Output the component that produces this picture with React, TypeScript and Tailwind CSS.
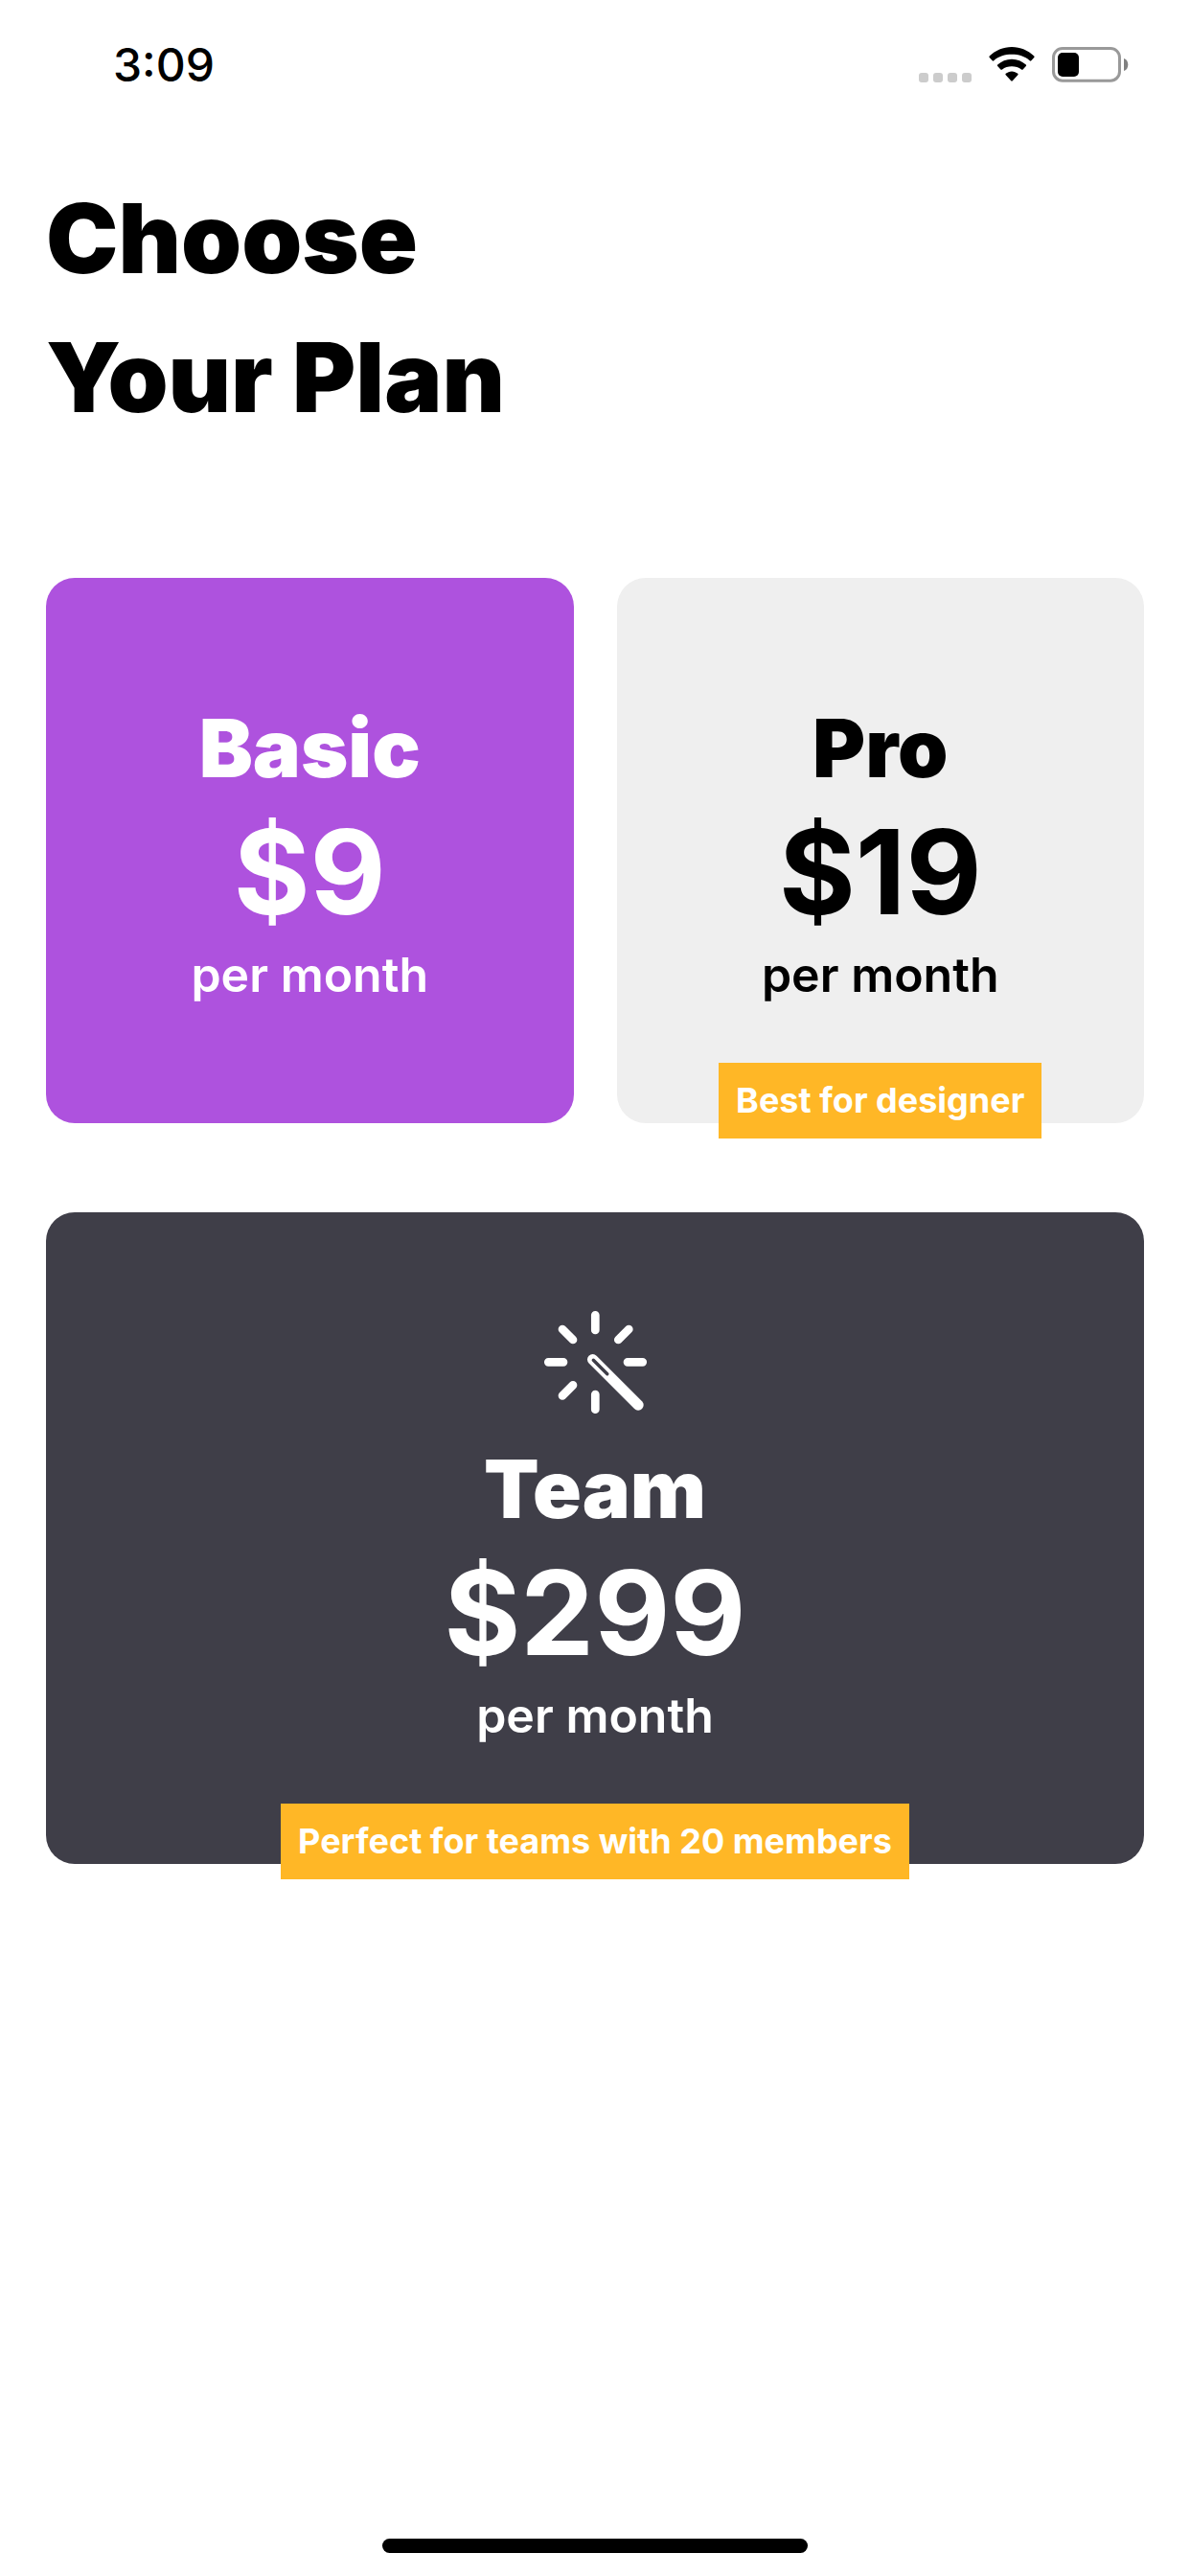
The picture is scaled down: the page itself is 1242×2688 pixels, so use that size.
import type { ReactNode } from "react";

function SignalDots() {
  return (
    <div className="flex gap-[5px]" aria-hidden="true">
      <span className="size-2.5 rounded-[3px] bg-[#cccccc]" />
      <span className="size-2.5 rounded-[3px] bg-[#cccccc]" />
      <span className="size-2.5 rounded-[3px] bg-[#cccccc]" />
      <span className="size-2.5 rounded-[3px] bg-[#cccccc]" />
    </div>
  );
}

function WifiIcon() {
  return (
    <svg viewBox="0 0 48 37" className="h-[37px] w-12" aria-hidden="true">
      <path d="M24 0C33 0 41.2 3.6 47.3 9.5Q48 10.3 47.3 11L44.3 14.3Q43.5 15 42.7 14.3C37.7 9.6 31.1 7.8 24 7.8S10.3 9.6 5.3 14.3Q4.5 15 3.7 14.3L0.7 11Q0 10.3 0.7 9.5C6.8 3.6 15 0 24 0Z" />
      <path d="M24 12.8C29.7 12.8 34.9 15 38.8 18.6Q39.6 19.4 38.8 20.1L35.6 23.4Q34.8 24.1 34 23.5C31.3 21.1 27.8 20.2 24 20.2S16.7 21.1 14 23.5Q13.2 24.1 12.4 23.4L9.2 20.1Q8.4 19.4 9.2 18.6C13.1 15 18.3 12.8 24 12.8Z" />
      <path d="M24 25.4C26.4 25.4 28.6 26.3 30.3 27.8Q31 28.5 30.3 29.2L24.8 35.3Q24 36.1 23.2 35.3L17.7 29.2Q17 28.5 17.7 27.8C19.4 26.3 21.6 25.4 24 25.4Z" />
    </svg>
  );
}

function BatteryIcon() {
  return (
    <svg viewBox="0 0 80 37" className="h-[37px] w-20" aria-hidden="true">
      <rect x="1.5" y="1.5" width="69" height="33.7" rx="9.5" fill="none" stroke="#999999" strokeWidth="3" />
      <rect x="6" y="6" width="22" height="25" rx="5" />
      <path d="M75 12C78.2 13 79.3 15.6 79.3 18.5S78.2 24 75 25Z" fill="#808080" />
    </svg>
  );
}

function WandIcon() {
  return (
    <svg viewBox="0 0 108 108" className="size-27" fill="none" strokeLinecap="round" aria-hidden="true">
      <path
        d="M54.3 5.3V21M54.3 88V103.7M5.3 54.3H21M88 54.3H103.7M20 20L31 31M89.3 20L78.3 31M20 89.3L31 78.3"
        stroke="white"
        strokeWidth="8.7"
      />
      <path d="M51.6 51.6L99.1 99.1" stroke="white" strokeWidth="11.2" />
      <path d="M52.3 52.3L66.8 66.8" stroke="#3f3e48" strokeWidth="3.4" />
    </svg>
  );
}

type PlanProps = {
  name: string;
  price: string;
  className: string;
  icon?: ReactNode;
  badge?: string;
};

function PlanCard({ name, price, className, icon, badge }: PlanProps) {
  return (
    <article className={`relative flex flex-col items-center rounded-[30px] pb-[127px] ${className}`}>
      {icon && <div className="mb-[30px]">{icon}</div>}
      <h2 className="text-[84px] leading-[98px] font-black">{name}</h2>
      <p className="text-[122px] leading-[159px] font-bold">{price}</p>
      <p className="text-[50px] leading-[56px] font-semibold">per month</p>
      {badge && (
        <p className="absolute -bottom-4 bg-[#ffb726] px-[18px] text-[36px] leading-[79px] font-bold whitespace-nowrap text-white">
          {badge}
        </p>
      )}
    </article>
  );
}

export default function App() {
  return (
    <div className="flex min-h-screen flex-col bg-white font-['Inter',sans-serif] text-black">
      <div className="flex items-end justify-between pt-11 pr-16 pl-[118px]">
        <time className="text-[48px] leading-[48px] font-medium">3:09</time>
        <div className="flex items-end gap-[18px] pb-1.5">
          <SignalDots />
          <WifiIcon />
          <BatteryIcon />
        </div>
      </div>

      <main className="px-12 pt-[84px]">
        <h1 className="text-[101px] leading-[145px] font-black">
          Choose
          <br />
          Your Plan
        </h1>
        <section className="mt-[137px] grid grid-cols-2 gap-x-[45px] gap-y-[93px]">
          <PlanCard name="Basic" price="$9" className="bg-[#ae52de] pt-[129px] text-white" />
          <PlanCard name="Pro" price="$19" badge="Best for designer" className="bg-[#efefef] pt-[129px]" />
          <PlanCard
            name="Team"
            price="$299"
            icon={<WandIcon />}
            badge="Perfect for teams with 20 members"
            className="col-span-2 bg-[#3f3e48] pt-[102px] text-white"
          />
        </section>
      </main>

      <div className="mt-auto mb-6 h-[15px] w-[444px] self-center rounded-full bg-black" />
    </div>
  );
}
